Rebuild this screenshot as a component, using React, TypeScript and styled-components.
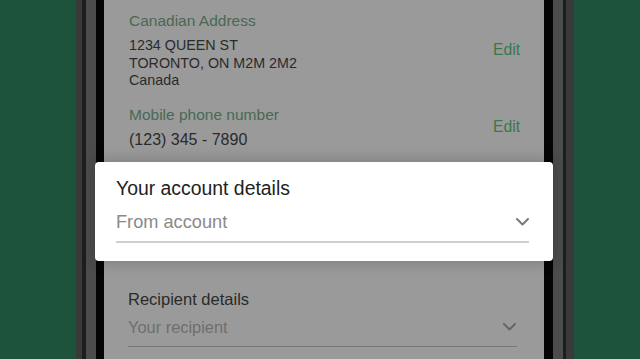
import React from "react";
import styled, { createGlobalStyle } from "styled-components";

const Global = createGlobalStyle`
  html, body {
    margin: 0;
    padding: 0;
    background: #1d533a;
  }
  body {
    font-family: "Liberation Sans", Arial, sans-serif;
  }
`;

const Page = styled.div`
  height: 359px;
  overflow: hidden;
  display: flex;
  padding-left: 76px;
  background: #1d533a;
`;

const Frame = styled.div`
  display: flex;
  border-left: 6px solid #3a3a3a;
  border-right: 8px solid #3a3a3a;
`;

const Rim = styled.div`
  display: flex;
  border-left: 4px solid #1e1e1e;
  border-right: 3px solid #1e1e1e;
`;

const Bevel = styled.div`
  display: flex;
  border-left: 10px solid #4c4c4c;
  border-right: 10px solid #4c4c4c;
  box-shadow: inset 4px 0 4px -2px #5c5c5c, inset -4px 0 4px -2px #5c5c5c;
`;

const Bezel = styled.div`
  display: flex;
  padding: 0 9px 0 8px;
  background: #050505;
`;

const Screen = styled.div`
  width: 440px;
  background: #9a9a9a;
  display: flex;
  flex-direction: column;
`;

const InfoList = styled.div`
  display: flex;
  flex-direction: column;
  gap: 15px;
  padding: 11px 24px 0 25px;
`;

const InfoRow = styled.div`
  display: flex;
  align-items: center;
  justify-content: space-between;
`;

const InfoText = styled.div`
  display: flex;
  flex-direction: column;
`;

const InfoLabel = styled.div`
  font-size: 15.5px;
  line-height: 20px;
  color: #486954;
`;

const InfoValue = styled.div<{ $large?: boolean }>`
  margin-top: ${(p) => (p.$large ? "5px" : "6px")};
  font-size: ${(p) => (p.$large ? "16px" : "14.3px")};
  line-height: ${(p) => (p.$large ? "20px" : "17.5px")};
  color: #2a2a2a;
`;

const EditLink = styled.span`
  font-size: 15.7px;
  color: #3b7849;
`;

const HighlightCard = styled.div`
  position: relative;
  margin: 12px -9px 0 -9px;
  padding: 14px 24px 18px 21px;
  background: #ffffff;
  border-radius: 4px;
  box-shadow: 0 0 14px 3px rgba(0, 0, 0, 0.16);
  display: flex;
  flex-direction: column;
`;

const CardTitle = styled.div`
  font-size: 19.4px;
  line-height: 24px;
  color: #222222;
`;

const SelectField = styled.div<{ $line: string; $thick: number }>`
  display: flex;
  align-items: center;
  justify-content: space-between;
  border-bottom: ${(p) => p.$thick}px solid ${(p) => p.$line};
`;

const CardSelect = styled(SelectField)`
  margin-top: 10px;
  padding-bottom: 7px;
`;

const Placeholder = styled.span<{ $size: number; $color: string }>`
  font-size: ${(p) => p.$size}px;
  line-height: ${(p) => (p.$size > 17 ? 24 : 22)}px;
  color: ${(p) => p.$color};
`;

const Recipient = styled.div`
  display: flex;
  flex-direction: column;
  padding: 27px 27px 0 24px;
`;

const RecipientTitle = styled.div`
  font-size: 16.5px;
  line-height: 22px;
  color: #2a2a2a;
`;

const RecipientSelect = styled(SelectField)`
  margin-top: 6px;
  padding-bottom: 8px;
`;

const Chevron = ({ color, right }: { color: string; right: number }) => (
  <svg
    width="13"
    height="8"
    viewBox="0 0 13 8"
    style={{ marginRight: right }}
    fill="none"
  >
    <polyline
      points="1,1 6.5,6.5 12,1"
      stroke={color}
      strokeWidth="2"
      strokeLinecap="round"
      strokeLinejoin="round"
    />
  </svg>
);

export default function App() {
  return (
    <>
      <Global />
      <Page>
        <Frame>
          <Rim>
            <Bevel>
              <Bezel>
                <Screen>
                  <InfoList>
                    <InfoRow>
                      <InfoText>
                        <InfoLabel>Canadian Address</InfoLabel>
                        <InfoValue>
                          1234 QUEEN ST
                          <br />
                          TORONTO, ON M2M 2M2
                          <br />
                          Canada
                        </InfoValue>
                      </InfoText>
                      <EditLink>Edit</EditLink>
                    </InfoRow>
                    <InfoRow>
                      <InfoText>
                        <InfoLabel>Mobile phone number</InfoLabel>
                        <InfoValue $large>(123) 345 - 7890</InfoValue>
                      </InfoText>
                      <EditLink>Edit</EditLink>
                    </InfoRow>
                  </InfoList>

                  <HighlightCard>
                    <CardTitle>Your account details</CardTitle>
                    <CardSelect $line="#cfcfcf" $thick={2}>
                      <Placeholder $size={18.2} $color="#8a8a8a">
                        From account
                      </Placeholder>
                      <Chevron color="#7a7a7a" right={0} />
                    </CardSelect>
                  </HighlightCard>

                  <Recipient>
                    <RecipientTitle>Recipient details</RecipientTitle>
                    <RecipientSelect $line="#777777" $thick={1}>
                      <Placeholder $size={16.4} $color="#6e6e6e">
                        Your recipient
                      </Placeholder>
                      <Chevron color="#666666" right={1} />
                    </RecipientSelect>
                  </Recipient>
                </Screen>
              </Bezel>
            </Bevel>
          </Rim>
        </Frame>
      </Page>
    </>
  );
}
